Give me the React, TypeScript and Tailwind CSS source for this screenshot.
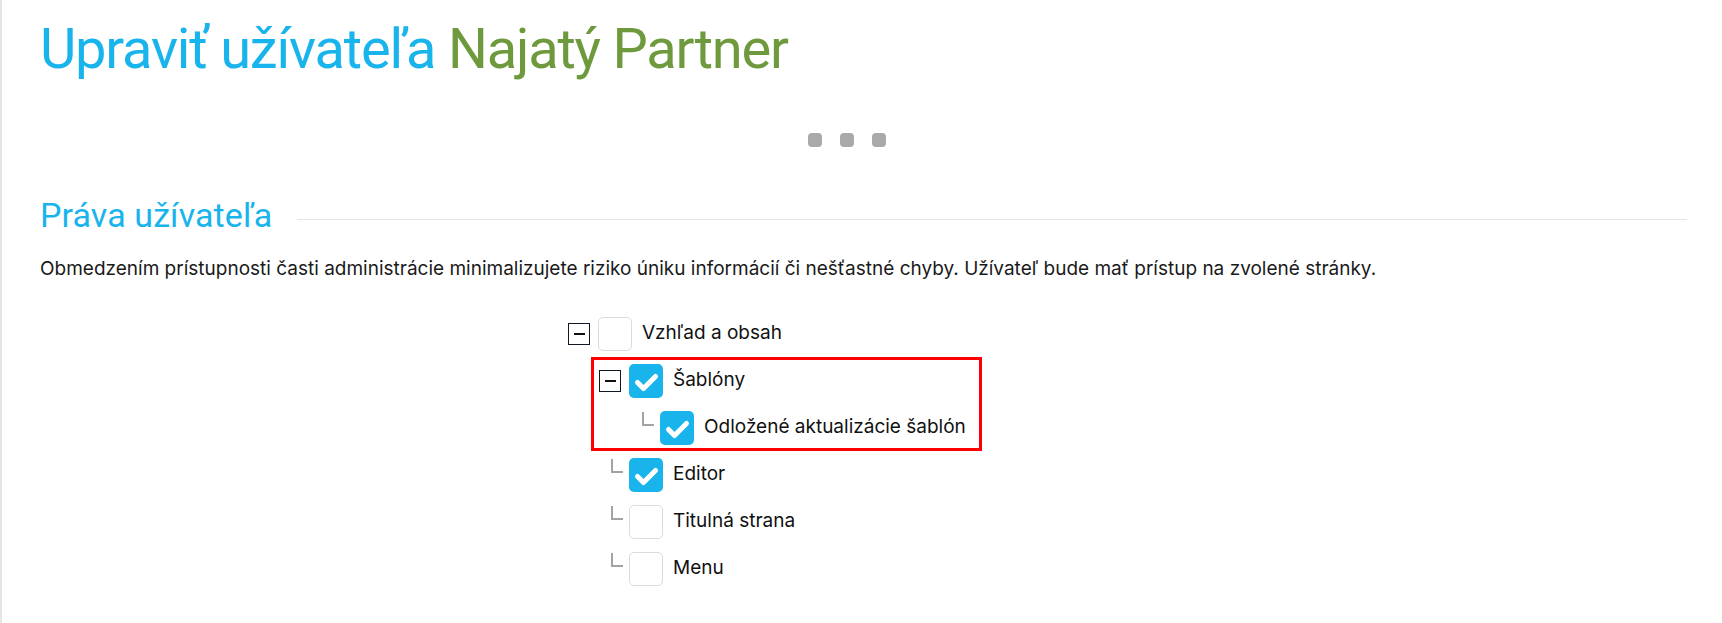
import React from 'react';

type Node = {
  label: string;
  level: 0 | 1 | 2;
  checked: boolean;
  toggle?: boolean;
};

const levelPad = {
  0: 'pl-0',
  1: 'pl-[31px]',
  2: 'pl-[62px]',
};

const MinusBox = () => (
  <div className="w-[22px] h-[22px] border border-[#111827] bg-white flex items-center justify-center mr-[8px]">
    <div className="w-[11px] h-[2px] bg-[#111]" />
  </div>
);

const Elbow = () => (
  <div className="w-[30px] h-[47px] shrink-0">
    <div className="ml-[12px] mt-[8px] w-[12px] h-[14px] border-l-2 border-b-2 border-[#a3a3a3]" />
  </div>
);

const Checkbox = ({ checked }: { checked: boolean }) =>
  checked ? (
    <div className="w-[34px] h-[34px] rounded-[5px] bg-[#1ab4ec] flex items-center justify-center shrink-0">
      <svg width="34" height="34" viewBox="0 0 34 34" fill="none">
        <path
          d="M8.5 18.5 L14.5 24.5 L26.5 12.5"
          stroke="white"
          strokeWidth="5"
          strokeLinecap="round"
          strokeLinejoin="round"
        />
      </svg>
    </div>
  ) : (
    <div className="w-[34px] h-[34px] rounded-[5px] bg-white border border-[#dcdcdc] shrink-0" />
  );

const Row = ({ node }: { node: Node }) => (
  <div className={`h-[47px] flex items-center ${levelPad[node.level]}`}>
    {node.toggle ? <MinusBox /> : <Elbow />}
    <Checkbox checked={node.checked} />
    <span className="ml-[10px] text-[19px] text-[#111]">{node.label}</span>
  </div>
);

export default function App() {
  const top: Node = { label: 'Vzhľad a obsah', level: 0, checked: false, toggle: true };
  const marked: Node[] = [
    { label: 'Šablóny', level: 1, checked: true, toggle: true },
    { label: 'Odložené aktualizácie šablón', level: 2, checked: true },
  ];
  const rest: Node[] = [
    { label: 'Editor', level: 1, checked: true },
    { label: 'Titulná strana', level: 1, checked: false },
    { label: 'Menu', level: 1, checked: false },
  ];

  return (
    <div
      className="min-h-[623px] bg-white border-l-2 border-[#e6e6e6] pl-[38px] pr-[35px]"
      style={{ fontFamily: 'Inter, "Noto Sans", sans-serif' }}
    >
      <h1
        className="pt-[21px] text-[56px] leading-none font-normal tracking-[-1.2px]"
        style={{ fontFamily: 'Roboto, "Liberation Sans", sans-serif' }}
      >
        <span className="text-[#1ab4ec]">Upraviť užívateľa</span>{' '}
        <span className="text-[#6e9a3d]">Najatý Partner</span>
      </h1>

      <div className="mt-[56px] flex gap-[18px] pl-[768px]">
        <div className="w-[14px] h-[14px] rounded-[4px] bg-[#a9a9a9]" />
        <div className="w-[14px] h-[14px] rounded-[4px] bg-[#a9a9a9]" />
        <div className="w-[14px] h-[14px] rounded-[4px] bg-[#a9a9a9]" />
      </div>

      <div className="mt-[51px] flex items-center">
        <h2
          className="text-[34px] leading-none font-normal text-[#1ab4ec] tracking-[0.1px]"
          style={{ fontFamily: 'Roboto, "Liberation Sans", sans-serif' }}
        >
          Práva užívateľa
        </h2>
        <div className="ml-[25px] mt-[8px] flex-1 h-px bg-[#e5e5e5]" />
      </div>

      <p className="mt-[23px] text-[19px] leading-[28px] text-[#1a1a1a]">
        Obmedzením prístupnosti časti administrácie minimalizujete riziko úniku informácií či nešťastné chyby. Užívateľ bude mať prístup na zvolené stránky.
      </p>

      <div className="mt-[27px] ml-[528px] pb-[20px]">
        <Row node={top} />
        <div className="relative">
          {marked.map((n) => (
            <Row key={n.label} node={n} />
          ))}
          <div className="pointer-events-none absolute left-[23px] top-0 h-full w-[391px] border-[3px] border-[#ff0000]" />
        </div>
        {rest.map((n) => (
          <Row key={n.label} node={n} />
        ))}
      </div>
    </div>
  );
}
